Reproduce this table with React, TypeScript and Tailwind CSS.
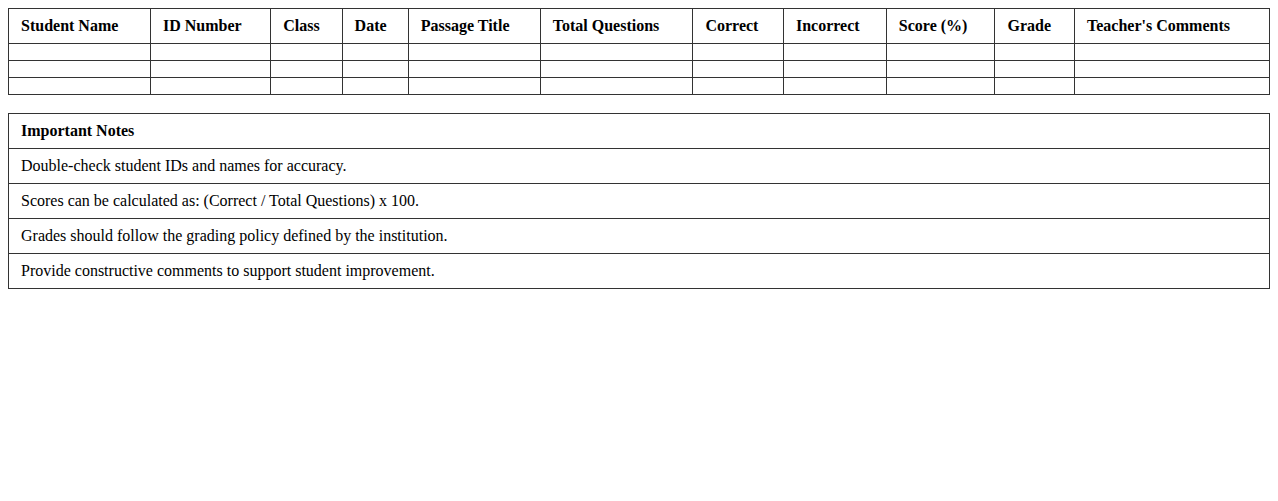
export default function App() {
  const headers = [
    "Student Name",
    "ID Number",
    "Class",
    "Date",
    "Passage Title",
    "Total Questions",
    "Correct",
    "Incorrect",
    "Score (%)",
    "Grade",
    "Teacher's Comments",
  ];
  const notes = [
    "Double-check student IDs and names for accuracy.",
    "Scores can be calculated as: (Correct / Total Questions) x 100.",
    "Grades should follow the grading policy defined by the institution.",
    "Provide constructive comments to support student improvement.",
  ];
  return (
    <div className="m-2 bg-white text-black font-['Liberation_Serif',serif] text-base leading-[18px]">
      <table className="w-full border-collapse">
        <thead>
          <tr>
            {headers.map((h) => (
              <th key={h} className="border border-[#333] px-3 py-2 text-left font-bold">
                {h}
              </th>
            ))}
          </tr>
        </thead>
        <tbody>
          {[0, 1, 2].map((r) => (
            <tr key={r}>
              {headers.map((h) => (
                <td key={h} className="border border-[#333] px-3 py-2"></td>
              ))}
            </tr>
          ))}
        </tbody>
      </table>
      <table className="mt-[18px] w-full border-collapse">
        <thead>
          <tr>
            <th className="border border-[#333] px-3 py-2 text-left font-bold">Important Notes</th>
          </tr>
        </thead>
        <tbody>
          {notes.map((n) => (
            <tr key={n}>
              <td className="border border-[#333] px-3 py-2">{n}</td>
            </tr>
          ))}
        </tbody>
      </table>
    </div>
  );
}
